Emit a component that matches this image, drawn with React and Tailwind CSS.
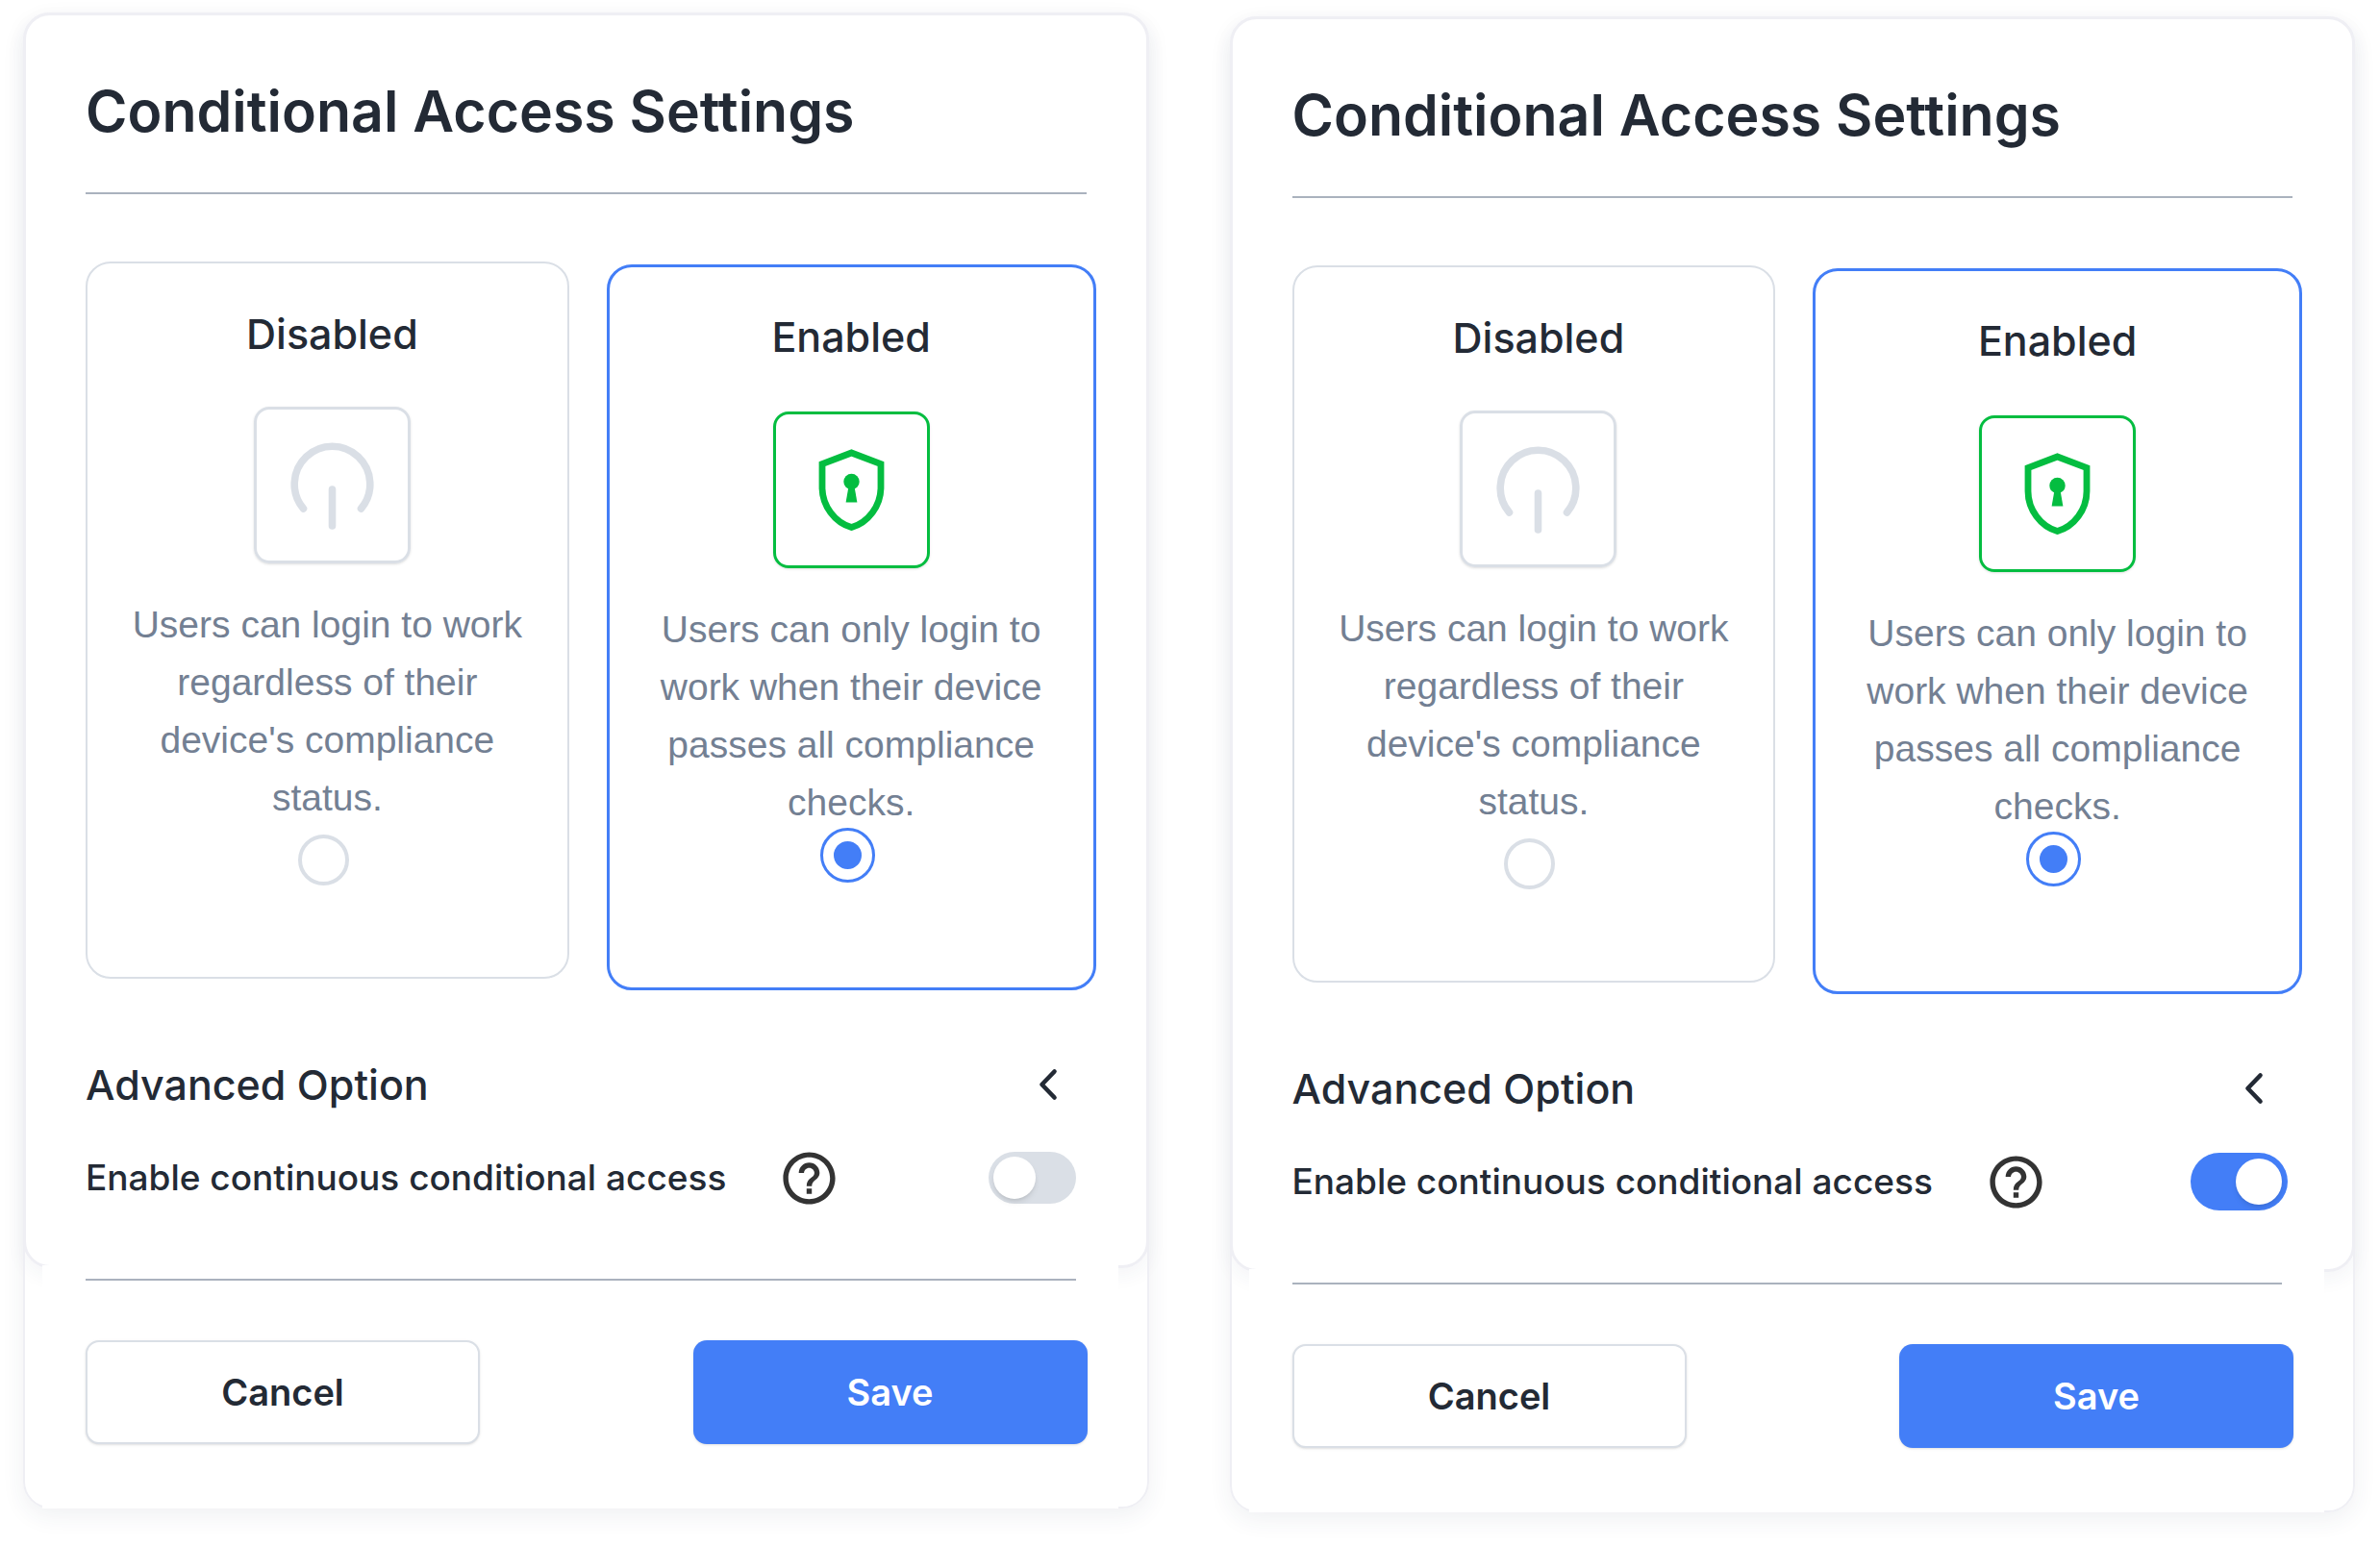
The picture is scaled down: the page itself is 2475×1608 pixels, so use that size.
import { useId, useState } from "react";
import clsx from "clsx";
import { MdHelpOutline } from "react-icons/md";

const OPTIONS = [
  {
    value: "disabled",
    title: "Disabled",
    text: "Users can login to work regardless of their device's compliance status.",
    Icon: PowerIcon,
  },
  {
    value: "enabled",
    title: "Enabled",
    text: "Users can only login to work when their device passes all compliance checks.",
    Icon: ShieldIcon,
  },
];

function PowerIcon() {
  return (
    <svg viewBox="0 0 157 157" className="size-full" fill="none" aria-hidden="true">
      <path
        d="M48.5 103 A39.3 39.3 0 1 1 108.5 103"
        stroke="#dadfe6"
        strokeWidth="7.6"
        strokeLinecap="round"
      />
      <path d="M78.5 83 V121" stroke="#dadfe6" strokeWidth="7.6" strokeLinecap="round" />
    </svg>
  );
}

function ShieldIcon() {
  return (
    <svg viewBox="0 0 157 157" className="size-full" fill="none" aria-hidden="true">
      <path
        d="M78.5 40 L109 51.5 V76 C109 95 96 112.5 78.5 117.5 C61 112.5 48 95 48 76 V51.5 Z"
        stroke="#04bd40"
        strokeWidth="6.8"
      />
      <circle cx="78.5" cy="70" r="8.2" fill="#04bd40" />
      <path d="M75.3 76 H81.7 L84.4 91.5 H72.6 Z" fill="#04bd40" />
    </svg>
  );
}

function ChevronIcon() {
  return (
    <svg viewBox="0 0 40 40" className="size-10" fill="none" aria-hidden="true">
      <path
        d="M26.5 6.5 L13.5 20 L26.5 33.5"
        stroke="#232a35"
        strokeWidth="4.6"
        strokeLinecap="round"
        strokeLinejoin="round"
      />
    </svg>
  );
}

function OptionCard({ option, group, selected, onSelect }) {
  const { Icon } = option;

  return (
    <label
      className={clsx(
        "flex cursor-pointer flex-col items-center rounded-[26px] bg-white px-11",
        selected
          ? "mt-[3px] border-3 border-[#437ef7] pt-[50px] pb-[109px]"
          : "border-2 border-[#dadfe6] pt-[51px] pb-[95px]"
      )}
    >
      <span
        className={clsx("flex flex-col items-center", selected ? "gap-14" : "gap-[54px] pl-[10px]")}
      >
        <span className="text-[43px] leading-[44px] font-medium text-[#232a35]">
          {option.title}
        </span>
        <span
          className={clsx(
            "size-[163px] rounded-2xl border-3 shadow-sm",
            selected ? "border-[#04bd40]" : "border-[#dadfe6]"
          )}
        >
          <Icon />
        </span>
      </span>
      <span className="mt-[34px] text-center font-['Liberation_Sans',Arial,sans-serif] text-[39px] leading-[60px] text-[#738093]">
        {option.text}
      </span>
      <span className={clsx("flex pr-2", selected ? "-mt-1" : "mt-2")}>
        <input
          type="radio"
          name={group}
          value={option.value}
          checked={selected}
          onChange={() => onSelect(option.value)}
          className="size-[53px] appearance-none rounded-full border-4 border-[#dadfe6] checked:size-[57px] checked:border-3 checked:border-[#437ef7] checked:bg-[#437ef7] checked:bg-clip-content checked:p-[11px]"
        />
      </span>
    </label>
  );
}

function Toggle({ id, checked, onChange }) {
  return (
    <input
      id={id}
      type="checkbox"
      role="switch"
      checked={checked}
      onChange={(e) => onChange(e.target.checked)}
      className="flex h-[54px] w-[91px] cursor-pointer appearance-none items-center rounded-full bg-[#dadfe6] px-[5px] before:size-[44px] before:rounded-full before:bg-white before:shadow-md before:content-[''] checked:h-[60px] checked:w-[101px] checked:justify-end checked:bg-[#437ef7] checked:px-[6px] checked:before:size-[48px]"
    />
  );
}

function SettingsPanel({ defaultContinuous }) {
  const id = useId();
  const [mode, setMode] = useState("enabled");
  const [continuous, setContinuous] = useState(defaultContinuous);

  return (
    <form
      onSubmit={(e) => e.preventDefault()}
      className="rounded-[28px] bg-white shadow-[0_8px_24px_rgba(40,50,90,0.07)] outline-2 -outline-offset-2 outline-[#efeff4]"
    >
      <div className="rounded-[28px] border-3 border-[#efeff4] px-[62px] pt-[70px] pb-[61px] shadow-[0_8px_20px_rgba(40,50,90,0.05)]">
        <h1 className="border-b-2 border-[#aab2be] pb-[54px] text-[59px] leading-[60px] font-semibold text-[#232a35]">
          Conditional Access Settings
        </h1>

        <div
          role="radiogroup"
          aria-label="Conditional access"
          className="mt-[70px] -mr-[10px] grid grid-cols-[503fr_509fr] items-start gap-[39px]"
        >
          {OPTIONS.map((option) => (
            <OptionCard
              key={option.value}
              option={option}
              group={`${id}-mode`}
              selected={mode === option.value}
              onSelect={setMode}
            />
          ))}
        </div>

        <div className="mt-[78px] flex items-center justify-between text-[#232a35]">
          <h2 className="text-[43px] leading-[40px] font-medium">Advanced Option</h2>
          <button type="button" aria-label="Toggle advanced option" className="mr-5">
            <ChevronIcon />
          </button>
        </div>

        <div className="mt-[47px] flex h-[60px] items-center text-[#232a35]">
          <label htmlFor={`${id}-continuous`} className="text-[37px] leading-[60px] font-medium">
            Enable continuous conditional access
          </label>
          <button type="button" aria-label="Help" className="ml-[54px]">
            <MdHelpOutline className="size-[65px] text-[#333333]" />
          </button>
          <div className="ml-auto flex w-[112px] justify-center">
            <Toggle id={`${id}-continuous`} checked={continuous} onChange={setContinuous} />
          </div>
        </div>
      </div>

      {/* Footer sits over the lower edge of the body */}
      <div className="relative mr-8 ml-5 -mt-[3px] bg-white pt-[14px] pr-8 pb-[67px] pl-[45px]">
        <hr className="mr-[12px] border-t-2 border-[#aab2be]" />
        <div className="mt-[62px] flex justify-between">
          <button
            type="button"
            className="h-[108px] w-[410px] rounded-[14px] border-2 border-[#dadfe6] bg-white text-[38px] font-semibold text-[#232a35] shadow-sm"
          >
            Cancel
          </button>
          <button
            type="submit"
            className="h-[108px] w-[410px] rounded-[14px] bg-[#437ef7] text-[38px] font-semibold text-white shadow-sm"
          >
            Save
          </button>
        </div>
      </div>
    </form>
  );
}

export default function App() {
  return (
    <main className="grid grid-cols-2 items-start gap-[84px] bg-white pt-[13px] pr-[26px] pb-9 pl-6 font-['Inter',sans-serif]">
      <SettingsPanel defaultContinuous={false} />
      <div className="pt-1">
        <SettingsPanel defaultContinuous />
      </div>
    </main>
  );
}
